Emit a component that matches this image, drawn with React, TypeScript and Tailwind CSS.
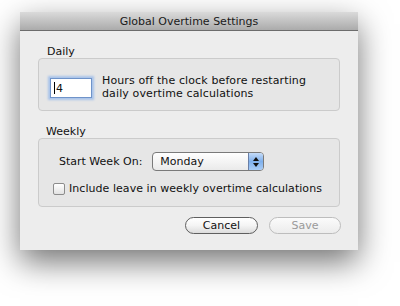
import React from "react";

export default function App() {
  return (
    <div
      className="w-[400px] h-[306px] bg-white pt-[12px] pl-[20px] overflow-hidden"
      style={{ fontFamily: '"DejaVu Sans", "Liberation Sans", sans-serif' }}
    >
      <div className="w-[338px] h-[238px] bg-[#ededed] flex flex-col shadow-[0_12px_30px_rgba(0,0,0,0.55)] text-[11px] leading-[13px] text-[#111]">
        <div className="h-[19px] shrink-0 border-b border-[#6c6c6c] bg-gradient-to-b from-[#dadada] to-[#ababab] flex items-center justify-center text-[#1a1a1a]">
          Global Overtime Settings
        </div>
        <div className="flex flex-col px-[18px] pt-[14px]">
          <div className="pl-[9px]">Daily</div>
          <div className="h-[53px] border border-[#cbcbcb] rounded-[4px] bg-[#e6e6e6] flex items-start pl-[11px] pt-[15px]">
            <div className="mt-[4px] w-[42px] h-[20px] bg-white border border-[#6f93c9] shadow-[0_0_2px_2px_#a9c4ea] flex items-center pl-[3px]">
              <span className="w-px h-[12px] bg-black mr-px" />
              <span>4</span>
            </div>
            <div className="ml-[10px] tracking-[0.12px]">
              Hours off the clock before restarting
              <br />
              daily overtime calculations
            </div>
          </div>
          <div className="pl-[8px] mt-[14px]">Weekly</div>
          <div className="h-[69px] border border-[#cbcbcb] rounded-[4px] bg-[#e6e6e6] flex flex-col pt-[13px]">
            <div className="flex items-center pl-[20px] h-[19px]">
              <span>Start Week On:</span>
              <div className="ml-[10px] w-[112px] h-[19px] rounded-[4px] border border-[#7a7a7a] flex overflow-hidden bg-gradient-to-b from-white to-[#eaeaea]">
                <div className="flex-1 flex items-center pl-[7px]">Monday</div>
                <div className="w-[15px] border-l border-[#6a7fa6] bg-gradient-to-b from-[#c4dbf8] via-[#7fb0ec] to-[#a9cdf7] flex flex-col items-center justify-center gap-[2px]">
                  <svg width="6" height="4" viewBox="0 0 6 4">
                    <path d="M3 0 L6 4 L0 4 Z" fill="#111" />
                  </svg>
                  <svg width="6" height="4" viewBox="0 0 6 4">
                    <path d="M0 0 L6 0 L3 4 Z" fill="#111" />
                  </svg>
                </div>
              </div>
            </div>
            <div className="flex items-center pl-[14px] mt-[11px]">
              <div className="w-[12px] h-[12px] rounded-[2px] border border-[#8c8c8c] bg-gradient-to-b from-white to-[#e2e2e2]" />
              <span className="ml-[4px] tracking-[0.05px]">Include leave in weekly overtime calculations</span>
            </div>
          </div>
        </div>
        <div className="flex justify-end gap-[11px] pr-[17px] mt-[10px]">
          <div className="w-[73px] h-[17px] rounded-full border border-[#5f5f5f] bg-gradient-to-b from-white via-[#f4f4f4] to-[#dcdcdc] flex items-center justify-center text-[#111]">
            Cancel
          </div>
          <div className="w-[72px] h-[17px] rounded-full border border-[#bdbdbd] bg-gradient-to-b from-[#fbfbfb] to-[#ececec] flex items-center justify-center text-[#9a9a9a]">
            Save
          </div>
        </div>
      </div>
    </div>
  );
}
